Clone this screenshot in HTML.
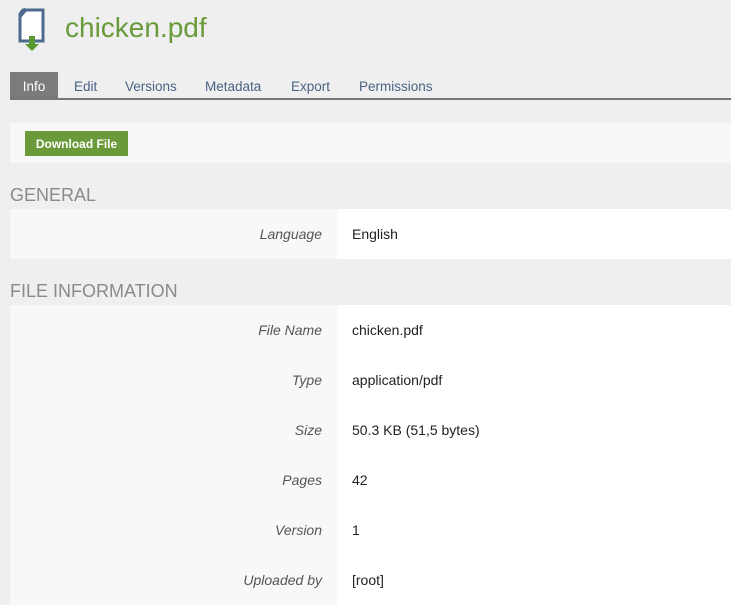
<!DOCTYPE html>
<html><head><style>
body{margin:0;background:#efefef;font-family:"Liberation Sans",sans-serif;width:731px;height:600px;overflow:hidden;position:relative}
.t{position:absolute;left:65px;top:12px;font-size:28px;color:#6a9a3a}
.tabs{position:absolute;left:10px;top:72px;right:0;height:26px;border-bottom:2px solid #777}
.tab{position:absolute;top:0;height:26px;line-height:29px;font-size:13.5px;color:#4a6385}
.tab.a{background:#7b7b7b;color:#fff;left:0;width:48px;text-align:center}
.panel{position:absolute;left:10px;right:0;top:123px;height:40px;background:#f8f8f8}
.btn{position:absolute;left:15px;top:8px;width:103px;height:25px;background:#6a9a3a;color:#fff;font-size:12px;font-weight:bold;line-height:26px;text-align:center}
h2{position:absolute;left:10px;margin:0;font-weight:normal;font-size:18px;color:#8a8a8a}
.row{position:absolute;left:10px;right:0;height:50px}
.l{position:absolute;left:0;width:327px;height:50px;background:#f8f8f8;text-align:right;font-style:italic;font-size:14px;color:#555;line-height:50px}
.l span{padding-right:15px}
.v{position:absolute;left:327px;right:0;height:50px;background:#fff;font-size:14px;color:#222;line-height:50px;padding-left:15px}
</style></head><body>
<svg style="position:absolute;left:17px;top:7px" width="30" height="46" viewBox="0 0 30 46">
<path d="M6 3H26V34H3V7Z" fill="#fff" stroke="#4e6a8f" stroke-width="3"/>
<path d="M3 9L9 2" stroke="#4e6a8f" stroke-width="4"/>
<rect x="12" y="29" width="6" height="9" fill="#5a9a30"/>
<path d="M8 37H22L15 44Z" fill="#5a9a30"/>
</svg>
<div class="t">chicken.pdf</div>
<div class="tabs">
<div class="tab a">Info</div>
<div class="tab" style="left:64px">Edit</div>
<div class="tab" style="left:115px">Versions</div>
<div class="tab" style="left:195px">Metadata</div>
<div class="tab" style="left:281px">Export</div>
<div class="tab" style="left:349px">Permissions</div>
</div>
<div class="panel"><div class="btn">Download File</div></div>
<h2 style="top:185px">GENERAL</h2>
<div class="row" style="top:209px"><div class="l"><span>Language</span></div><div class="v">English</div></div>
<h2 style="top:281px">FILE INFORMATION</h2>
<div class="row" style="top:305px"><div class="l"><span>File Name</span></div><div class="v">chicken.pdf</div></div>
<div class="row" style="top:355px"><div class="l"><span>Type</span></div><div class="v">application/pdf</div></div>
<div class="row" style="top:405px"><div class="l"><span>Size</span></div><div class="v">50.3 KB (51,5 bytes)</div></div>
<div class="row" style="top:455px"><div class="l"><span>Pages</span></div><div class="v">42</div></div>
<div class="row" style="top:505px"><div class="l"><span>Version</span></div><div class="v">1</div></div>
<div class="row" style="top:555px"><div class="l"><span>Uploaded by</span></div><div class="v">[root]</div></div>
</body></html>
